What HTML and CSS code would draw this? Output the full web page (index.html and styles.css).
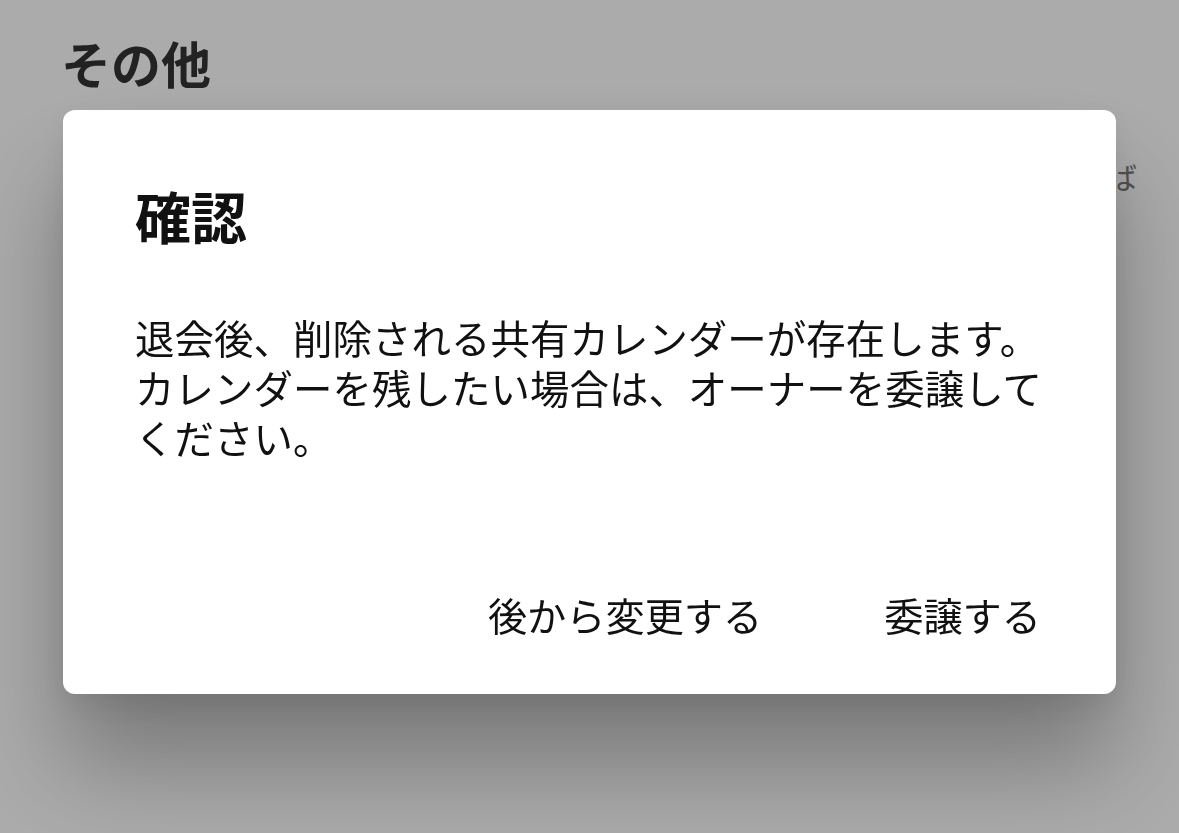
FILE: index.html
```html
<!DOCTYPE html>
<html lang="ja">
<head>
<meta charset="utf-8">
<title>確認</title>
<link rel="stylesheet" href="styles.css">
</head>
<body>
<main class="page">
  <h1 class="section-title">その他</h1>
  <p class="section-text">共有カレンダーのオーナーを委譲すれば</p>
</main>
<div class="overlay">
  <div class="dialog" role="dialog" aria-labelledby="dlg-title">
    <h2 class="dialog-title" id="dlg-title">確認</h2>
    <p class="dialog-body">退会後、削除される共有カレンダーが存在します。カレンダーを残したい場合は、オーナーを委譲してください。</p>
    <div class="dialog-actions">
      <button class="dialog-btn" type="button">後から変更する</button>
      <button class="dialog-btn" type="button">委譲する</button>
    </div>
  </div>
</div>
</body>
</html>
```
FILE: styles.css
```css
html, body {
  margin: 0;
  padding: 0;
  height: 100%;
}
body {
  background: #ffffff;
  font-family: "Noto Sans CJK JP", "Noto Sans", sans-serif;
  overflow: hidden;
}
.page {
  padding: 32px 42px 0 61px;
}
.section-title {
  margin: 0;
  font-size: 50px;
  line-height: 60px;
  font-weight: 700;
  color: #333333;
}
.section-text {
  margin: 64px 0 0 0;
  font-size: 30px;
  line-height: 40px;
  color: #7a7a7a;
  text-align: right;
}
.overlay {
  position: fixed;
  inset: 0;
  background: rgba(0, 0, 0, 0.33);
  display: flex;
  justify-content: center;
  align-items: flex-start;
  padding-top: 110px;
}
.dialog {
  width: 1053px;
  height: 584px;
  box-sizing: border-box;
  background: #ffffff;
  border-radius: 12px;
  padding: 71px 75px 55px 72px;
  display: flex;
  flex-direction: column;
  box-shadow: 0 70px 100px 0 rgba(0, 0, 0, 0.3), 0 10px 30px rgba(0, 0, 0, 0.08);
}
.dialog-title {
  margin: 0;
  font-size: 56px;
  line-height: 67px;
  font-weight: 700;
  color: #111111;
}
.dialog-body {
  margin: 64px -9px 0 0;
  font-size: 39.4px;
  letter-spacing: 0.1px;
  line-height: 50px;
  color: #111111;
}
.dialog-actions {
  margin-top: auto;
  display: flex;
  justify-content: flex-end;
  gap: 122px;
}
.dialog-btn {
  border: 0;
  background: none;
  padding: 0;
  font-family: inherit;
  font-size: 39.2px;
  line-height: 50px;
  color: #111111;
  cursor: pointer;
}
```
